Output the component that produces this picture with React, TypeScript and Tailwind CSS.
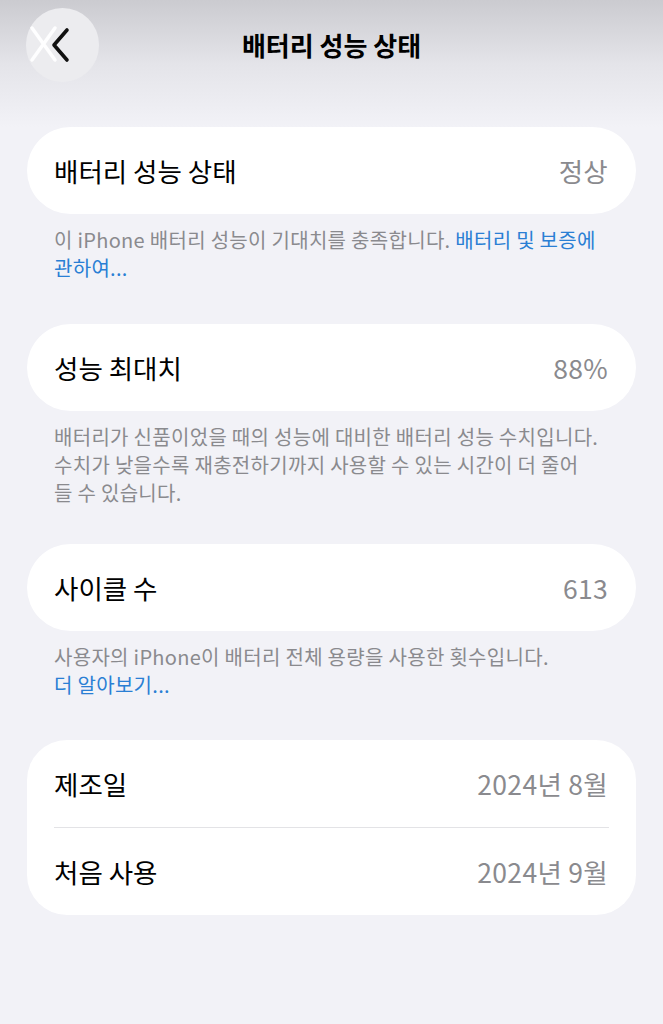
import React from "react";

const font = { fontFamily: '"Noto Sans CJK KR", "Noto Sans", sans-serif' };

function Row({ label, value }: { label: string; value: string }) {
  return (
    <div className="flex h-[87px] items-center justify-between pl-[27px] pr-[28px]">
      <span className="text-[26.5px] text-black">{label}</span>
      <span className="text-[26.5px] tracking-[0.3px] text-[#8a8a8e]">{value}</span>
    </div>
  );
}

function Card({ children, round }: { children: React.ReactNode; round: string }) {
  return <div className={`mx-[27px] bg-white ${round}`}>{children}</div>;
}

function Footer({ children }: { children: React.ReactNode }) {
  return (
    <p className="ml-[54px] mt-[12px] whitespace-nowrap text-[20px] leading-[28px] tracking-[0.3px] text-[#8a8a8e]">
      {children}
    </p>
  );
}

export default function App() {
  return (
    <div className="min-h-[1024px] w-[663px] bg-[#f2f2f7]" style={font}>
      <div className="relative h-[127px] bg-gradient-to-b from-[#cbcbd0] via-[#e4e4e9] to-[#f2f2f7]">
        <div className="absolute left-[26px] top-[8px] flex h-[74px] w-[73px] items-center justify-center rounded-full bg-[#ececef]">
          <svg width="73" height="74" viewBox="0 0 73 74">
            <path d="M6 20 L29 52 M6 52 L29 20" stroke="white" strokeWidth="3.5" strokeLinecap="round" fill="none" opacity="0.95" />
            <path d="M41 22 L28 37 L41 52" stroke="#111" strokeWidth="3.6" strokeLinecap="round" strokeLinejoin="round" fill="none" />
          </svg>
        </div>
        <div className="absolute left-0 right-0 top-[25px] text-center text-[26px] font-semibold text-black">
          배터리 성능 상태
        </div>
      </div>

      <Card round="rounded-full">
        <Row label="배터리 성능 상태" value="정상" />
      </Card>
      <Footer>
        이 iPhone 배터리 성능이 기대치를 충족합니다.{" "}
        <span className="text-[#2a7fd4]">배터리 및 보증에</span>
        <br />
        <span className="text-[#2a7fd4]">관하여...</span>
      </Footer>

      <div className="h-[42px]" />
      <Card round="rounded-full">
        <Row label="성능 최대치" value="88%" />
      </Card>
      <Footer>
        배터리가 신품이었을 때의 성능에 대비한 배터리 성능 수치입니다.
        <br />
        수치가 낮을수록 재충전하기까지 사용할 수 있는 시간이 더 줄어
        <br />들 수 있습니다.
      </Footer>

      <div className="h-[37px]" />
      <Card round="rounded-full">
        <Row label="사이클 수" value="613" />
      </Card>
      <Footer>
        사용자의 iPhone이 배터리 전체 용량을 사용한 횟수입니다.
        <br />
        <span className="text-[#2a7fd4]">더 알아보기...</span>
      </Footer>

      <div className="h-[41px]" />
      <Card round="rounded-[40px]">
        <Row label="제조일" value="2024년 8월" />
        <div className="ml-[27px] mr-[27px] h-px bg-[#e3e3e6]" />
        <Row label="처음 사용" value="2024년 9월" />
      </Card>
    </div>
  );
}
